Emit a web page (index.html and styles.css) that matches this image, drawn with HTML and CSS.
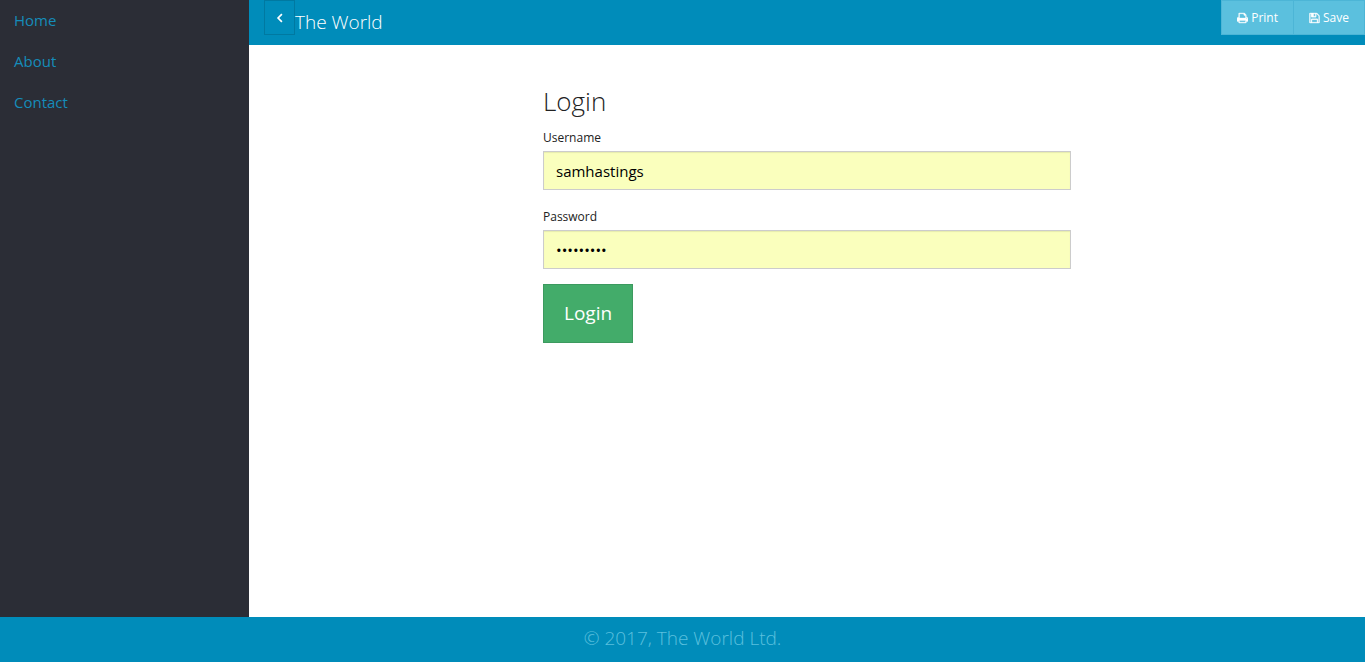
FILE: index.html
```html
<!DOCTYPE html>
<html lang="en">
<head>
<meta charset="utf-8">
<meta name="viewport" content="width=device-width, initial-scale=1">
<title>The World</title>
<link rel="stylesheet" href="styles.css">
</head>
<body>
<div class="layout">
  <nav class="sidebar">
    <a href="#">Home</a>
    <a href="#">About</a>
    <a href="#">Contact</a>
  </nav>
  <div class="main">
    <header class="topbar">
      <button class="btn btn-toggle" type="button" aria-label="Toggle menu">
        <svg class="chevron" viewBox="0 0 8 10" aria-hidden="true"><path d="M5.9 1.2 2.1 5l3.8 3.8" fill="none" stroke="currentColor" stroke-width="1.7"/></svg>
      </button>
      <h1 class="brand">The World</h1>
      <div class="actions">
        <button class="btn btn-info" type="button"><svg class="icon" viewBox="64 0 1664 1792" aria-hidden="true"><path fill="currentColor" stroke="currentColor" stroke-width="50" d="M448 1536h896v-256h-896v256zm0-640h896v-384h-160q-40 0-68-28t-28-68v-160h-640v640zm1152 64q0-26-19-45t-45-19-45 19-19 45 19 45 45 19 45-19 19-45zm128 0v416q0 13-9.5 22.5t-22.5 9.5h-224v160q0 40-28 68t-68 28h-960q-40 0-68-28t-28-68v-160h-224q-13 0-22.5-9.5t-9.5-22.5v-416q0-79 56.5-135.5t135.5-56.5h64v-544q0-40 28-68t68-28h672q40 0 88 20t76 48l152 152q28 28 48 76t20 88v256h64q79 0 135.5 56.5t56.5 135.5z"/></svg>Print</button>
        <button class="btn btn-info" type="button"><svg class="icon" viewBox="64 0 1664 1792" aria-hidden="true"><path fill="currentColor" stroke="currentColor" stroke-width="50" d="M512 1536h768v-384h-768v384zm896 0h128v-896q0-14-10-38.5t-20-34.5l-281-281q-10-10-34-20t-39-10v416q0 40-28 68t-68 28h-576q-40 0-68-28t-28-68v-416h-128v1280h128v-416q0-40 28-68t68-28h832q40 0 68 28t28 68v416zm-384-928v-320q0-13-9.5-22.5t-22.5-9.5h-192q-13 0-22.5 9.5t-9.5 22.5v320q0 13 9.5 22.5t22.5 9.5h192q13 0 22.5-9.5t9.5-22.5zm640 32v928q0 40-28 68t-68 28h-1344q-40 0-68-28t-28-68v-1344q0-40 28-68t68-28h928q40 0 88 20t76 48l280 280q28 28 48 76t20 88z"/></svg>Save</button>
      </div>
    </header>
    <main class="content">
      <form class="login">
        <h2 class="login-title">Login</h2>
        <label for="username">Username</label>
        <input id="username" type="text" value="samhastings">
        <label for="password">Password</label>
        <input id="password" type="password" value="worldpass">
        <button class="btn-login" type="submit">Login</button>
      </form>
    </main>
  </div>
</div>
<footer class="footer">© 2017, The World Ltd.</footer>
</body>
</html>
```
FILE: styles.css
```css
* {
  box-sizing: border-box;
}

body {
  margin: 0;
  min-height: 100vh;
  display: flex;
  flex-direction: column;
  background: #fff;
  color: #222;
  font-family: "Open Sans", "Liberation Sans", sans-serif;
  font-size: 15px;
  line-height: 21px;
}

button,
input {
  font-family: inherit;
  border-radius: 0;
  margin: 0;
}

.layout {
  flex: 1;
  display: flex;
}

.sidebar {
  flex: none;
  width: 249px;
  background: #2b2d36;
}

.sidebar a {
  display: block;
  padding: 10px 14px;
  color: #158cba;
  text-decoration: none;
}

.main {
  flex: 1;
  min-width: 0;
}

.topbar {
  display: flex;
  align-items: flex-start;
  height: 45px;
  padding-left: 15px;
  background: #008cba;
  color: #fff;
}

.brand {
  margin: 0;
  font-size: 19px;
  font-weight: 300;
  line-height: 44px;
}

.actions {
  display: flex;
  margin-left: auto;
}

.btn {
  display: flex;
  align-items: center;
  justify-content: center;
  height: 35px;
  padding: 0 15px;
  border: 1px solid #4cb5d6;
  color: #fff;
  font-size: 12px;
  line-height: 18px;
}

.btn-toggle {
  width: 31px;
  padding: 0;
  background: #008cba;
  border-color: #0079a1;
}

.btn-info {
  background: #5bc0de;
}

.btn-info + .btn-info {
  margin-left: -1px;
}

.icon {
  width: 11px;
  height: 12px;
  margin-right: 3px;
}

.chevron {
  width: 8px;
  height: 10px;
}

.content {
  display: flex;
  justify-content: center;
  padding-top: 36px;
}

.login {
  width: 50%;
  padding: 0 15px;
}

.login-title {
  margin: 0 0 8px;
  font-size: 26px;
  font-weight: 300;
  line-height: 40px;
}

.login label {
  display: block;
  margin-bottom: 4px;
  font-size: 12px;
  line-height: 18px;
}

.login input {
  display: block;
  width: 100%;
  height: 39px;
  margin-bottom: 18px;
  padding: 8px 12px;
  border: 1px solid #ccc;
  background: #faffbd;
  color: #000;
  box-shadow: inset 0 1px 1px rgba(0, 0, 0, 0.08);
  font-size: 15px;
}

.login .btn-login {
  display: block;
  margin-top: -3px;
  padding: 15px 20px;
  border: 1px solid #3c9a5f;
  background: #43ac6a;
  color: #fff;
  font-size: 19px;
  line-height: 27px;
}

.footer {
  height: 45px;
  background: #008cba;
  color: #5bc0de;
  font-size: 19px;
  font-weight: 300;
  line-height: 42px;
  text-align: center;
}
```
